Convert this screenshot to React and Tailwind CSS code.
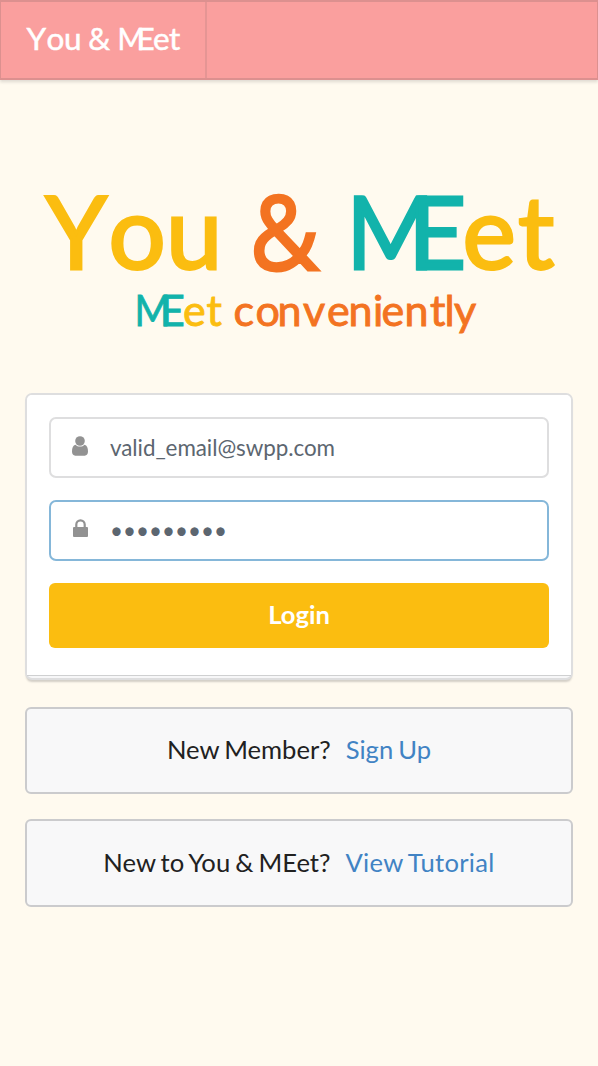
import React from "react";

function HeaderLogo() {
  return (
    <svg
      width="205"
      height="76"
      viewBox="1 2 205 76"
      className="block overflow-visible font-['Lato',sans-serif] text-[31.5px]"
      fill="#fff"
      stroke="#fff"
      strokeWidth="0.5"
    >
      <text y="50" x="26.500 46.500 64">You</text>
      <text y="50" x="88" textLength="22" lengthAdjust="spacingAndGlyphs" className="font-['Open_Sans',sans-serif]">&amp;</text>
      <text y="50">
        <tspan x="117.500" textLength="27" lengthAdjust="spacingAndGlyphs">M</tspan>
        <tspan x="136.500 153 169">Eet</tspan>
      </text>
    </svg>
  );
}

function MainLogo() {
  return (
    <svg
      width="598"
      height="170"
      viewBox="0 180 598 170"
      className="block overflow-visible font-['Lato',sans-serif]"
      strokeWidth="2.8"
    >
      <g className="text-[101px]">
        <text y="268.800" fill="#fbbd10" stroke="#fbbd10">
          <tspan x="45.500" textLength="61.500" lengthAdjust="spacingAndGlyphs">Y</tspan>
          <tspan x="108.500 166">ou</tspan>
        </text>
        <text
          y="269.500"
          x="250"
          textLength="69"
          lengthAdjust="spacingAndGlyphs"
          fill="#f37321"
          stroke="#f37321"
          className="font-['Open_Sans',sans-serif] text-[103px] font-medium"
        >
          &amp;
        </text>
        <text y="268.800" fill="#12b3ab" stroke="#12b3ab">
          <tspan x="346.500" textLength="88" lengthAdjust="spacingAndGlyphs">M</tspan>
          <tspan x="408">E</tspan>
          <tspan x="462.500 518" fill="#fbbd10" stroke="#fbbd10">et</tspan>
        </text>
      </g>
      <g className="text-[43px]" strokeWidth="0.9">
        <text y="325.500" fill="#12b3ab" stroke="#12b3ab">
          <tspan x="134.500" textLength="36" lengthAdjust="spacingAndGlyphs">M</tspan>
          <tspan x="160">E</tspan>
          <tspan x="183 206.500" fill="#fbbd10" stroke="#fbbd10">et</tspan>
        </text>
        <text
          y="325.500"
          x="233.500 255.500 277.500 303 327 348.500 373 381.500 404.500 430 444.500 454"
          fill="#f37321"
          stroke="#f37321"
        >
          conveniently
        </text>
      </g>
    </svg>
  );
}

function UserIcon() {
  return (
    <svg width="16" height="20" viewBox="0 0 16 20" fill="#929292" className="block">
      <circle cx="8" cy="5" r="4.800" />
      <path d="M3.500 8.700C1 9.200 0 11.700 0 15.600 0 18.200 1.300 19.700 3.300 19.700h9.400c2 0 3.300-1.500 3.300-4.100 0-3.900-1-6.400-3.500-6.900C11.400 9.900 9.800 10.600 8 10.600S4.600 9.900 3.500 8.700Z" />
    </svg>
  );
}

function LockIcon() {
  return (
    <svg width="15" height="20" viewBox="0 0 15 20" className="ml-px block">
      <path d="M3.300 9V5.500a4.200 4.200 0 0 1 8.400 0V9" fill="none" stroke="#929292" strokeWidth="2.200" />
      <rect y="8" width="15" height="10" rx="1" fill="#929292" />
    </svg>
  );
}

function Field({ icon, focused, children }) {
  return (
    <div
      className={
        "flex h-[61px] items-center rounded-[7px] border-2 bg-white text-[22.4px] text-[#5c6670] " +
        (focused ? "border-[#85b7d9]" : "border-[#dededf]")
      }
    >
      <div className="flex w-[59px] shrink-0 justify-center pb-1 pr-0.5">{icon}</div>
      {children}
    </div>
  );
}

function Message({ text, link, linkClass }) {
  return (
    <div className="flex items-center justify-center gap-[15px] rounded-[6px] border-2 border-[#cbcbcd] bg-[#f8f8f9] pb-[2px] text-[25.6px] text-[#212121] [word-spacing:-1.5px]">
      <span>{text}</span>
      <a href="#" className={"text-[#4183c4] " + linkClass}>{link}</a>
    </div>
  );
}

export default function App() {
  return (
    <div className="flex h-[1066px] w-[598px] flex-col bg-[#fffaef] font-['Lato',sans-serif]">
      <header className="flex h-20 shrink-0 border-2 border-x border-[#dc908f] bg-[#fa9f9e] shadow-[0_2px_3px_rgba(34,36,38,0.15)]">
        <div className="w-[206px] border-r-2 border-[#e59594]">
          <HeaderLogo />
        </div>
      </header>
      <div className="mt-[100px]">
        <MainLogo />
      </div>
      <main className="mt-[43px] flex flex-col px-[25px]">
        <section className="flex h-[287px] flex-col rounded-[7px] border-2 border-[#dededf] bg-[#f7f7f8] pb-[2px] shadow-[0_3px_2px_-1px_rgba(34,36,38,0.2)]">
          <div className="flex grow flex-col gap-[22px] rounded-t-[5px] border-b border-[#cfd0d1] bg-white px-[22px] pt-[22px]">
            <Field icon={<UserIcon />}>
              <span className="tracking-[-0.05px]">valid_email@swpp.com</span>
            </Field>
            <Field icon={<LockIcon />} focused>
              <span>•••••••••</span>
            </Field>
            <button className="h-[65px] rounded-[6px] bg-[#fbbd10] pb-[2px] text-[25.6px] font-bold text-white">
              Login
            </button>
          </div>
        </section>
        <div className="mt-[27px] grid grid-rows-[87px_88px] gap-[25px]">
          <Message text="New Member?" link="Sign Up" linkClass="" />
          <Message text="New to You & MEet?" link="View Tutorial" linkClass="tracking-[0.3px]" />
        </div>
      </main>
    </div>
  );
}
